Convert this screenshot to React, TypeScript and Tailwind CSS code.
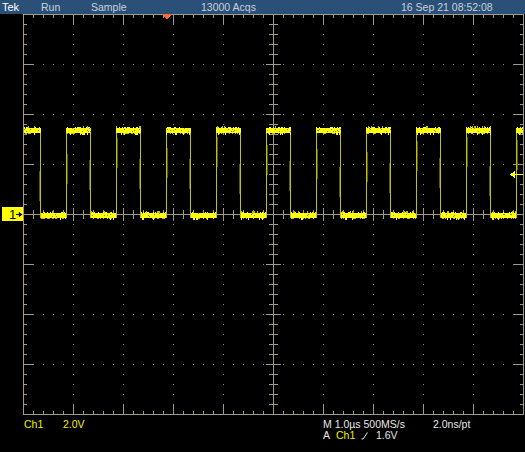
import React from 'react';

// graticule geometry (svg coords, svg starts at page y=14)
const LEFT = 23;
const RIGHT = 523;
const TOP = 0;
const BOTTOM = 400;
const CX = 273;
const CY = 200;
const GRID = '#a19b85';
const DOT = '#8f8d84';

function mulberry32(a: number) {
  return () => {
    a |= 0;
    a = (a + 0x6d2b79f5) | 0;
    let t = Math.imul(a ^ (a >>> 15), 1 | a);
    t = (t + Math.imul(t ^ (t >>> 7), 61 | t)) ^ t;
    return ((t ^ (t >>> 14)) >>> 0) / 4294967296;
  };
}

const px = (x: number, y: number, h = 1) => `M${x} ${y}h1v${h}h-1z`;

const Graticule: React.FC = () => {
  const ticks: string[] = [];
  const dots: React.ReactNode[] = [];

  // dotted major divisions
  for (let i = 1; i < 10; i++) {
    if (i === 5) continue;
    const x = LEFT + i * 50 + 0.5;
    dots.push(
      <line key={`v${i}`} x1={x} y1={TOP} x2={x} y2={BOTTOM} stroke={DOT} strokeDasharray="1 9" />
    );
  }
  for (let j = 1; j < 8; j++) {
    if (j === 4) continue;
    const y = TOP + j * 50 + 0.5;
    dots.push(
      <line key={`h${j}`} x1={LEFT} y1={y} x2={RIGHT} y2={y} stroke={DOT} strokeDasharray="1 9" />
    );
  }

  // border and centre-axis ticks
  for (let x = LEFT + 10; x < RIGHT; x += 10) {
    const major = (x - LEFT) % 50 === 0;
    const len = major ? 10 : 4;
    ticks.push(`M${x + 0.5} ${TOP}v${len}`);
    ticks.push(`M${x + 0.5} ${BOTTOM + 1}v${-len}`);
    if (x !== CX) {
      const c = major ? 6 : 4;
      ticks.push(`M${x + 0.5} ${CY - c}v${c * 2 + 1}`);
    }
  }
  for (let y = TOP + 10; y < BOTTOM; y += 10) {
    const major = (y - TOP) % 50 === 0;
    const len = major ? 10 : 4;
    ticks.push(`M${LEFT} ${y + 0.5}h${len}`);
    ticks.push(`M${RIGHT + 1} ${y + 0.5}h${-len}`);
    if (y !== CY) {
      const c = major ? 7 : 4;
      ticks.push(`M${CX - c} ${y + 0.5}h${c * 2 + 1}`);
    }
  }

  // square wave, 1 µs period = 50 px, 50 % duty
  const rnd = mulberry32(2109);
  const HI = 114;
  const LO = 199;
  let bright = '';
  let dim = '';
  let dark = '';
  const edges: React.ReactNode[] = [];

  const band = (a: number, b: number, top: number) => {
    bright += `M${a} ${top}h${b - a + 1}v5h${-(b - a + 1)}z`;
    for (let x = a; x <= b; x++) {
      const r = rnd();
      if (r < 0.3) bright += px(x, top - 1, 1);
      else if (r < 0.42) dim += px(x, top - 2, 2);
      if (rnd() < 0.3) dim += px(x, top + 5, 1);
      if (rnd() < 0.12) bright += px(x, top + 5, 2);
      if (rnd() < 0.18) dark += px(x, top + Math.floor(rnd() * 4), 1);
    }
  };

  for (let k = -1; k <= 10; k++) {
    const rise = 16 + 50 * k;
    const fall = 40 + 50 * k;
    const nextRise = rise + 50;
    const ha = Math.max(LEFT + 1, rise);
    const hb = Math.min(RIGHT - 1, fall);
    if (hb >= ha) band(ha, hb, HI);
    const la = Math.max(LEFT + 1, fall + 1);
    const lb = Math.min(RIGHT - 1, nextRise - 1);
    if (lb >= la) band(la, lb, LO);
    [rise, fall].forEach((x, n) => {
      if (x > LEFT && x < RIGHT) {
        edges.push(
          <line key={`e${k}-${n}`} x1={x + 0.5} y1={HI} x2={x + 0.5} y2={LO + 5} stroke="#c2c200" />
        );
        const off = n === 0 ? 1 : -1;
        const y0 = n === 0 ? HI + 8 + Math.floor(rnd() * 20) : LO - 40 - Math.floor(rnd() * 20);
        edges.push(
          <line key={`t${k}-${n}`} x1={x + 0.5 + off} y1={y0} x2={x + 0.5 + off} y2={y0 + 30} stroke="#5a5a00" />
        );
      }
    });
  }

  return (
    <svg width={525} height={401} className="block" shapeRendering="crispEdges">
      {dots}
      <rect x={LEFT + 0.5} y={TOP + 0.5} width={RIGHT - LEFT} height={BOTTOM - TOP} fill="none" stroke={GRID} />
      <line x1={CX + 0.5} y1={TOP} x2={CX + 0.5} y2={BOTTOM} stroke={GRID} />
      <line x1={LEFT} y1={CY + 0.5} x2={RIGHT} y2={CY + 0.5} stroke={GRID} />
      <path d={ticks.join('')} stroke={GRID} fill="none" />

      {edges}
      <path d={dim} fill="#c4c400" />
      <path d={bright} fill="#ffff14" />
      <path d={dark} fill="#8d8d00" />

      {/* trigger position */}
      <polygon points="161.5,0 172.5,0 167,5.5" fill="#ff6a2a" />
      {/* trigger level */}
      <line x1={514} y1={160.5} x2={523} y2={160.5} stroke="#ffff00" />
      <polygon points="510,160.5 514.5,157 514.5,164" fill="#ffff00" />
    </svg>
  );
};

const RampIcon: React.FC = () => (
  <svg width={8} height={9} viewBox="0 0 8 9" className="mt-[1px]">
    <path d="M0.5 8 H2 L6.5 1.5" stroke="#e6e6e6" strokeWidth={1} fill="none" />
  </svg>
);

export default function App() {
  return (
    <div className="h-[452px] w-[525px] overflow-hidden bg-black font-['Liberation_Sans',Arial,sans-serif] select-none">
      {/* status bar */}
      <div className="flex h-[14px] items-center bg-[#2a5078] pl-[2px] text-[10.5px] leading-[14px] text-[#c8d1de]">
        <span className="w-[39px] text-[11px] text-white">Tek</span>
        <span className="w-[50px]">Run</span>
        <span className="w-[110px]">Sample</span>
        <span className="w-[200px]">13000 Acqs</span>
        <span>16 Sep 21 08:52:08</span>
      </div>

      {/* display */}
      <div className="relative h-[401px]">
        <Graticule />
        <div className="absolute left-[2px] top-[193px] flex h-[14px] w-[21px] items-center bg-[#ffff00] pl-[7px]">
          <span className="w-[8px] text-[13px] leading-none text-black">1</span>
          <svg width={7} height={7} viewBox="0 0 7 7">
            <path d="M0 3.5 H4" stroke="#000" />
            <polygon points="3,0.5 7,3.5 3,6.5" fill="#000" />
          </svg>
        </div>
      </div>

      {/* readout */}
      <div className="flex pt-[4px] text-[10.5px] leading-[11px] text-[#e6e6e6]">
        <div className="flex w-[323px] pl-[24px] text-[#f2f200]">
          <span className="w-[39px]">Ch1</span>
          <span>2.0V</span>
        </div>
        <div className="flex flex-col">
          <div className="flex">
            <span className="w-[110px]">M 1.0µs 500MS/s</span>
            <span>2.0ns/pt</span>
          </div>
          <div className="flex items-start">
            <span className="w-[13px]">A</span>
            <span className="w-[25px] text-[#f2f200]">Ch1</span>
            <span className="w-[15px]">
              <RampIcon />
            </span>
            <span>1.6V</span>
          </div>
        </div>
      </div>
    </div>
  );
}
